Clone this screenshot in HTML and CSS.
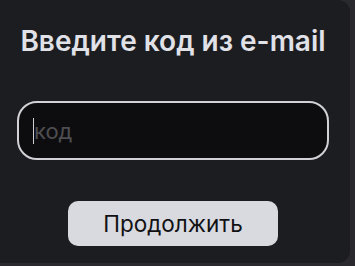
FILE: index.html
```html
<!DOCTYPE html>
<html lang="ru">
<head>
    <meta charset="UTF-8">
    <meta name="viewport" content="width=device-width, initial-scale=1.0">
    <title>Код из e-mail</title>
    <link rel="stylesheet" href="styles.css">
</head>
<body>

<div class="card">
    <h1 class="title">Введите код из e-mail</h1>
    <div class="field">
        <span class="caret"></span>
        <input type="text" class="code" placeholder="код">
    </div>
    <button class="button">Продолжить</button>
</div>

</body>
</html>
```

FILE: styles.css
```css
html, body {
    margin: 0;
    height: 100%;
}
body {
    font-family: Inter, "Noto Sans", sans-serif;
    background-color: #2a2a2e;
}
.card {
    width: 350px;
    height: 263px;
    box-sizing: border-box;
    background-color: #1c1d21;
    border-radius: 0 12px 12px 0;
    display: flex;
    flex-direction: column;
    align-items: center;
    padding-top: 24px;
}
.title {
    margin: 0;
    font-size: 28px;
    font-weight: 600;
    color: #e1e1e8;
    line-height: 34px;
    margin-left: -4px;
}
.field {
    margin-top: 43px;
    width: 312px;
    height: 59px;
    box-sizing: border-box;
    border: 2px solid #d2d2d6;
    border-radius: 20px;
    background-color: #0d0d0f;
    display: flex;
    align-items: center;
    padding-left: 14px;
    margin-left: -4px;
}
.caret {
    width: 1px;
    height: 26px;
    background-color: #d0d0d0;
}
.code {
    flex: 1;
    min-width: 0;
    border: none;
    outline: none;
    background: transparent;
    font-family: Inter, "Noto Sans", sans-serif;
    font-size: 22px;
    color: #e1e1e8;
    padding: 0;
}
.code::placeholder {
    color: #4e4e52;
}
.button {
    margin-top: 41px;
    width: 210px;
    height: 45px;
    border: none;
    border-radius: 10px;
    background-color: #d9dadf;
    font-family: Inter, "Noto Sans", sans-serif;
    font-size: 22.5px;
    color: #111114;
    cursor: pointer;
    margin-left: -4px;
}
```
